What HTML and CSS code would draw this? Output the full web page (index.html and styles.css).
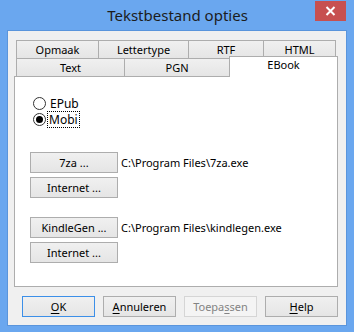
FILE: index.html
```html
<!DOCTYPE html>
<html lang="nl">
<head>
    <meta charset="UTF-8">
    <title>Tekstbestand opties</title>
    <link rel="stylesheet" href="styles.css">
</head>
<body>
    <div class="window">
        <div class="titlebar">
            <span></span>
            <div class="title">Tekstbestand opties</div>
            <button class="close-button" type="button">
                <svg width="11" height="10" viewBox="0 0 11 10">
                    <path d="M1.5 1 L9.5 9 M9.5 1 L1.5 9" stroke="#fff" stroke-width="2"/>
                </svg>
            </button>
        </div>
        <div class="client">
            <div class="tabs">
                <div class="tab-row row-back">
                    <div class="tab w82">Opmaak</div>
                    <div class="tab w90">Lettertype</div>
                    <div class="tab w75">RTF</div>
                    <div class="tab w72">HTML</div>
                </div>
                <div class="tab-row row-front">
                    <div class="tab w108">Text</div>
                    <div class="tab w105">PGN</div>
                    <div class="tab w108 active">EBook</div>
                </div>
            </div>
            <div class="panel">
                <div class="radio-group">
                    <label class="radio">
                        <span class="radio-circle"></span>
                        <span class="radio-label">EPub</span>
                    </label>
                    <label class="radio checked">
                        <span class="radio-circle"></span>
                        <span class="radio-label focused">Mobi</span>
                    </label>
                </div>
                <div class="tool-group">
                    <div class="path-row">
                        <button class="btn tool-btn" type="button">7za ...</button>
                        <span class="path">C:\Program Files\7za.exe</span>
                    </div>
                    <button class="btn tool-btn" type="button">Internet ...</button>
                </div>
                <div class="tool-group">
                    <div class="path-row">
                        <button class="btn tool-btn" type="button">KindleGen ...</button>
                        <span class="path">C:\Program Files\kindlegen.exe</span>
                    </div>
                    <button class="btn tool-btn" type="button">Internet ...</button>
                </div>
            </div>
            <div class="dialog-buttons">
                <button class="btn dlg-btn default" type="button"><u>O</u>K</button>
                <button class="btn dlg-btn" type="button"><u>A</u>nnuleren</button>
                <button class="btn dlg-btn" type="button" disabled>Toepa<u>s</u>sen</button>
                <button class="btn dlg-btn" type="button"><u>H</u>elp</button>
            </div>
        </div>
    </div>
</body>
</html>
```

FILE: styles.css
```css
* {
    box-sizing: border-box;
}
body {
    margin: 0;
    font-family: "Noto Sans", "DejaVu Sans", sans-serif;
    font-size: 11px;
    color: #000;
}
.window {
    width: 354px;
    height: 332px;
    background-color: #6aa7ef;
    display: flex;
    flex-direction: column;
}
.titlebar {
    height: 30px;
    display: grid;
    grid-template-columns: 1fr auto 1fr;
    align-items: start;
}
.title {
    font-size: 15px;
    color: #1c1c1c;
    line-height: 30px;
    padding-left: 1px;
}
.close-button {
    justify-self: end;
    margin: 1px 8px 0 0;
    width: 31px;
    height: 20px;
    border: none;
    padding: 0;
    background-color: #c75050;
    display: flex;
    align-items: center;
    justify-content: center;
}
.client {
    flex: 1;
    margin: 0 7px 7px 7px;
    border: 1px solid #5a95dc;
    background-color: #f0f0f0;
    padding: 9px 8px 8px 6px;
    display: flex;
    flex-direction: column;
}
.tabs {
    padding: 0 0 0 2px;
}
.tab-row {
    display: flex;
}
.tab {
    border: 1px solid #adadad;
    margin-right: -1px;
    background: linear-gradient(#f0f0f0, #e5e5e5);
    text-align: center;
    line-height: 17px;
}
.row-back .tab {
    height: 19px;
    margin-bottom: -1px;
}
.row-back .tab:last-child {
    width: 73px;
}
.row-front {
    align-items: flex-end;
}
.row-front .tab {
    height: 18px;
    border-bottom: none;
}
.row-front .tab.active {
    height: 21px;
    margin-top: -2px;
    margin-bottom: -1px;
    background: #fff;
    position: relative;
    z-index: 1;
    line-height: 16px;
    width: 109px;
}
.w72 { width: 72px; }
.w75 { width: 76px; }
.w82 { width: 83px; }
.w90 { width: 91px; }
.w105 { width: 106px; }
.w108 { width: 109px; }
.panel {
    width: 324px;
    height: 211px;
    background-color: #fff;
    border: 1px solid #adadad;
    padding: 20px 15px 0 15px;
}
.radio-group {
    display: flex;
    flex-direction: column;
    gap: 3px;
    padding-left: 3px;
}
.radio {
    display: flex;
    align-items: center;
    gap: 3px;
    height: 13px;
}
.radio-circle {
    width: 13px;
    height: 13px;
    border: 1px solid #333;
    border-radius: 50%;
    background: #fff;
    display: flex;
    align-items: center;
    justify-content: center;
}
.radio.checked .radio-circle::after {
    content: "";
    width: 7px;
    height: 7px;
    border-radius: 50%;
    background: #000;
}
.radio-label {
    padding: 0 1px;
    line-height: 15px;
    font-size: 12px;
}
.radio-label.focused {
    outline: 1px dotted #000;
    margin-left: -1px;
}
.tool-group {
    display: flex;
    flex-direction: column;
    gap: 4px;
    margin-top: 26px;
}
.tool-group + .tool-group {
    margin-top: 19px;
}
.path-row {
    display: flex;
    align-items: center;
    gap: 3px;
}
.btn {
    font-family: inherit;
    font-size: 11px;
    color: #000;
    border: 1px solid #adadad;
    background: linear-gradient(#f0f0f0, #e5e5e5);
    padding: 0;
    line-height: 19px;
}
.btn u {
    text-decoration-thickness: 1px;
    text-underline-offset: 2px;
}
.tool-btn {
    width: 88px;
    height: 21px;
}
.dialog-buttons {
    display: flex;
    justify-content: flex-end;
    gap: 8px;
    margin-top: 9px;
}
.dlg-btn {
    width: 73px;
    height: 21px;
}
.dlg-btn.default {
    border-color: #3c8fe8;
}
.dlg-btn:disabled {
    border-color: #d5d5d5;
    background: #f4f4f4;
    color: #838383;
}
```
